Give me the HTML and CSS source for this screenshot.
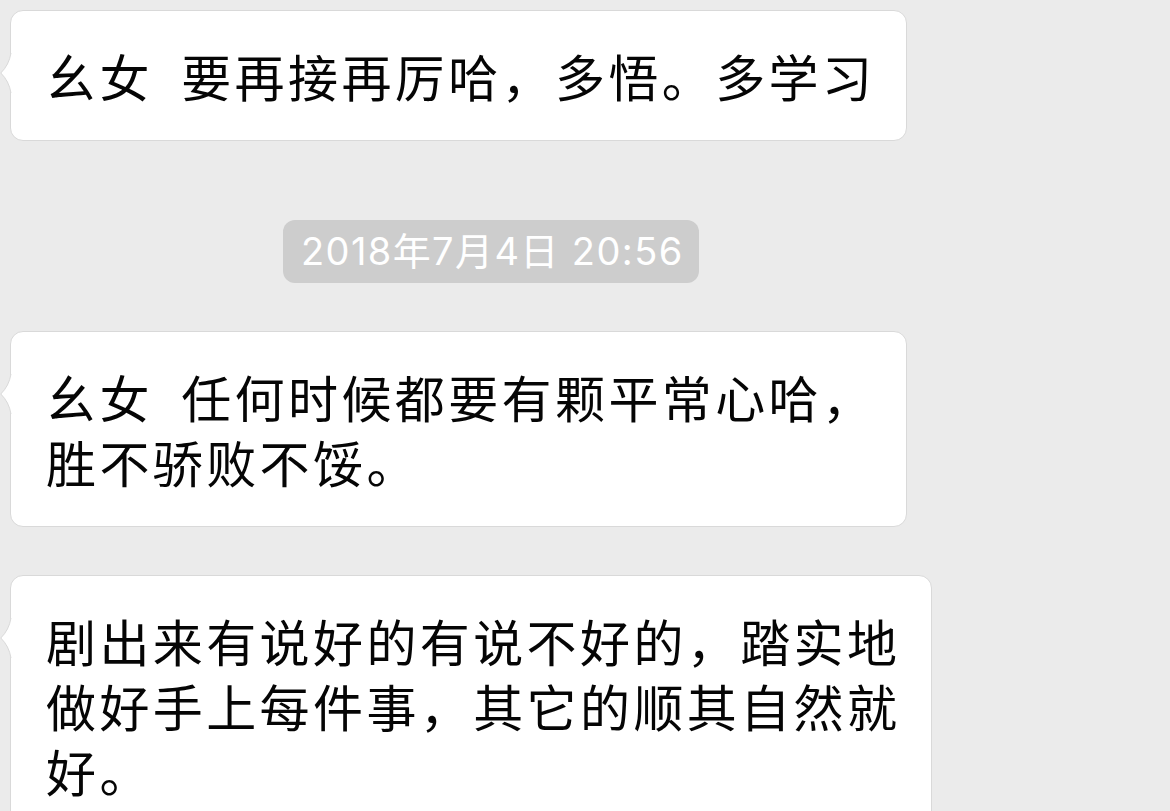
FILE: index.html
```html
<!DOCTYPE html>
<html lang="zh-CN">

<head>
    <meta charset="UTF-8">
    <meta name="viewport" content="width=device-width, initial-scale=1.0">
    <title>聊天记录</title>
    <link rel="stylesheet" href="styles.css">
</head>

<body>
    <div class="chat">
        <div class="msg">
            <div class="bubble">
                <svg class="tail" viewBox="0 0 12 40" width="12" height="40">
                    <path class="tail-fill" d="M12 0 L11 0 Q9 12 0.8 20 Q9 28 11 40 L12 40 Z" />
                    <path class="tail-line" d="M11 0 Q9 12 0.8 20 Q9 28 11 40" />
                </svg>
                幺女&ensp;要再接再厉哈，多悟。多学习
            </div>
        </div>

        <div class="time-row">
            <span class="time">2018年7月4日 20:56</span>
        </div>

        <div class="msg">
            <div class="bubble">
                <svg class="tail" viewBox="0 0 12 40" width="12" height="40">
                    <path class="tail-fill" d="M12 0 L11 0 Q9 12 0.8 20 Q9 28 11 40 L12 40 Z" />
                    <path class="tail-line" d="M11 0 Q9 12 0.8 20 Q9 28 11 40" />
                </svg>
                幺女&ensp;任何时候都要有颗平常心哈，<br>胜不骄败不馁。
            </div>
        </div>

        <div class="msg">
            <div class="bubble">
                <svg class="tail" viewBox="0 0 12 40" width="12" height="40">
                    <path class="tail-fill" d="M12 0 L11 0 Q9 12 0.8 20 Q9 28 11 40 L12 40 Z" />
                    <path class="tail-line" d="M11 0 Q9 12 0.8 20 Q9 28 11 40" />
                </svg>
                剧出来有说好的有说不好的，踏实地<br>做好手上每件事，其它的顺其自然就<br>好。
            </div>
        </div>
    </div>
</body>

</html>
```

FILE: styles.css
```css
* {
    margin: 0;
    padding: 0;
    box-sizing: border-box;
}

html,
body {
    height: 100%;
    overflow: hidden;
}

body {
    background-color: #ebebeb;
    font-family: "Noto Sans CJK SC", "Noto Sans", sans-serif;
}

.chat {
    display: flex;
    flex-direction: column;
    gap: 48px;
    padding: 10px 0 0 10px;
}

.msg {
    display: flex;
}

.bubble {
    position: relative;
    background-color: white;
    border: 1px solid #d9d9d9;
    border-radius: 13px;
    padding: 32px 31px 32px 35px;
    font-size: 50px;
    letter-spacing: 3.4px;
    line-height: 65px;
    color: #050505;
    white-space: nowrap;
}

.tail {
    position: absolute;
    left: -11px;
    top: 42px;
    display: block;
}

.tail-fill {
    fill: white;
}

.tail-line {
    fill: none;
    stroke: #d9d9d9;
    stroke-width: 1;
}

.time-row {
    display: flex;
    padding-left: 273px;
    margin-top: 31px;
}

.time {
    background-color: #cdcdcd;
    color: white;
    border-radius: 12px;
    height: 63px;
    line-height: 63px;
    padding: 0 15px 0 18px;
    font-family: "Inter", "Noto Sans CJK SC", sans-serif;
    font-size: 38px;
    letter-spacing: 1.4px;
}
```
